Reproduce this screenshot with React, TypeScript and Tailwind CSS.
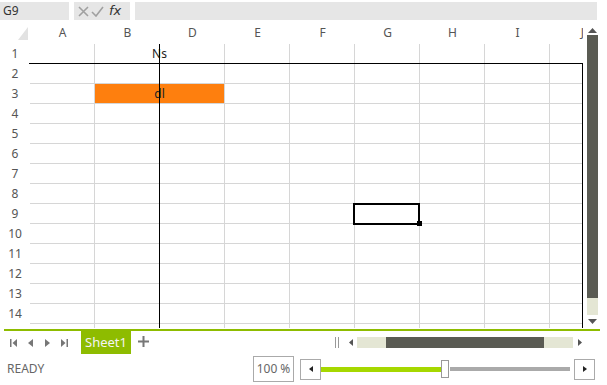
import React from "react";

const cols = ["A", "B", "D", "E", "F", "G", "H", "I", "J"];
const rows = Array.from({ length: 15 }, (_, i) => i + 1);

function Cell({ w, children, bg, last }: { w: number; children?: React.ReactNode; bg?: string; last?: boolean }) {
  return (
    <div
      className={`shrink-0 h-full flex items-center justify-center text-[12px] text-[#222] ${last ? "" : "border-r border-[#d6d6d6]"}`}
      style={{ width: w, background: bg }}
    >
      {children}
    </div>
  );
}

export default function App() {
  return (
    <div
      className="w-[607px] h-[385px] bg-white relative overflow-hidden select-none"
      style={{ fontFamily: '"Noto Sans", "Open Sans", sans-serif' }}
    >
      {/* formula bar */}
      <div className="flex h-[22px] pt-[2px]">
        <div className="w-[69px] h-[18px] bg-[#e6e6e6] text-[12px] leading-[18px] text-[#333] pl-[3px]">G9</div>
        <div className="ml-[5px] w-[56px] h-[18px] bg-[#e6e6e6] flex items-center pl-[4px] gap-[2px]">
          <svg width="11" height="11" viewBox="0 0 11 11">
            <path d="M1 1 L10 10 M10 1 L1 10" stroke="#a0a0a0" strokeWidth="1.6" />
          </svg>
          <svg width="13" height="11" viewBox="0 0 13 11">
            <path d="M1 6 L5 10 L12 1" stroke="#a0a0a0" strokeWidth="1.6" fill="none" />
          </svg>
          <span className="italic text-[13px] text-[#333] ml-[3px] leading-[18px]" style={{ fontFamily: '"DejaVu Sans", sans-serif' }}>fx</span>
        </div>
        <div className="ml-[5px] w-[462px] h-[18px] bg-[#e6e6e6]" />
      </div>

      {/* grid + vertical scroll */}
      <div className="flex h-[306px]">
        <div className="w-[583px] h-full overflow-hidden relative">
          {/* column headers */}
          <div className="flex h-[22px]">
            <div className="w-[30px] shrink-0 h-full flex items-end justify-start pl-[18px] pb-[4px]">
              <svg width="10" height="13" viewBox="0 0 10 13">
                <polygon points="10,0 10,13 0,13" fill="#e2e2e2" />
              </svg>
            </div>
            {cols.map((c) => (
              <div key={c} className="w-[65px] shrink-0 h-full flex items-center justify-center text-[12px] text-[#555]">
                {c}
              </div>
            ))}
          </div>
          {/* rows */}
          {rows.map((r) => (
            <div key={r} className="flex h-[20px]">
              <div className="w-[30px] shrink-0 h-full flex items-center justify-center text-[12px] text-[#555]">{r < 15 ? r : ""}</div>
              <div className="flex h-full border-b border-[#d6d6d6]">
                <Cell w={65} />
                {r === 1 ? (
                  <Cell w={130}>Ns</Cell>
                ) : r === 3 ? (
                  <Cell w={130} bg="#fe7f0e">dl</Cell>
                ) : (
                  <>
                    <Cell w={65} />
                    <Cell w={65} />
                  </>
                )}
                {["E", "F", "G", "H", "I"].map((c) => (
                  <Cell key={c} w={65} />
                ))}
                <Cell w={65} last />
              </div>
            </div>
          ))}
          {/* frozen pane lines */}
          <div className="absolute left-[29px] top-[41px] w-[554px] h-[270px] border-t border-r border-black" />
          <div className="absolute left-[159px] top-[22px] w-px h-[284px] bg-black" />
          {/* selection */}
          <div className="absolute left-[353px] top-[181px] w-[67px] h-[22px] border-2 border-black" />
          <div className="absolute left-[417px] top-[199px] w-[5px] h-[5px] bg-black" />
        </div>
        {/* vertical scrollbar */}
        <div className="w-[15px] h-full flex flex-col items-center pl-[3px]">
          <div className="h-[13px] flex items-end pb-[2px]">
            <svg width="9" height="5" viewBox="0 0 9 5">
              <polygon points="4.5,0 9,5 0,5" fill="#555" />
            </svg>
          </div>
          <div className="w-[11px] h-[263px] bg-[#5a5b53]" />
          <div className="w-[11px] h-[17px] bg-[#e4e6d4]" />
          <div className="h-[13px] flex items-center">
            <svg width="9" height="5" viewBox="0 0 9 5">
              <polygon points="0,0 9,0 4.5,5" fill="#555" />
            </svg>
          </div>
        </div>
      </div>

      {/* green divider */}
      <div className="ml-[4px] w-[596px] h-[2px] mt-[1px] bg-[#8ebc00]" />

      {/* sheet bar */}
      <div className="flex h-[23px] items-center">
        <div className="flex items-center h-full pl-[10px] gap-[10px] w-[81px]">
          <svg width="7" height="8" viewBox="0 0 7 8"><rect x="0" y="0" width="1.5" height="8" fill="#777" /><polygon points="7,0 7,8 2.5,4" fill="#777" /></svg>
          <svg width="7" height="8" viewBox="0 0 7 8"><polygon points="6,0 6,8 1,4" fill="#777" /></svg>
          <svg width="7" height="8" viewBox="0 0 7 8"><polygon points="1,0 1,8 6,4" fill="#777" /></svg>
          <svg width="7" height="8" viewBox="0 0 7 8"><polygon points="0,0 0,8 4.5,4" fill="#777" /><rect x="5.5" y="0" width="1.5" height="8" fill="#777" /></svg>
        </div>
        <div className="w-[50px] h-full bg-[#8ebc00] text-[#f4f4f4] text-[13px] flex items-center justify-center">Sheet1</div>
        <div className="ml-[6px] w-[12px] h-full flex items-center justify-center pb-[3px]">
          <svg width="11" height="11" viewBox="0 0 11 11"><path d="M5.5 0 V11 M0 5.5 H11" stroke="#777" strokeWidth="2" /></svg>
        </div>
        <div className="ml-[186px] h-full flex items-center">
          <div className="flex gap-[2px] h-[12px] pb-[2px]">
            <div className="w-px h-[11px] bg-[#999]" />
            <div className="w-px h-[11px] bg-[#999]" />
          </div>
          <div className="ml-[10px]">
            <svg width="4" height="7" viewBox="0 0 4 7"><polygon points="4,0 4,7 0,3.5" fill="#555" /></svg>
          </div>
          <div className="ml-[4px] w-[216px] h-[11px] bg-[#e4e6d4] flex">
            <div className="ml-[29px] w-[158px] h-full bg-[#5a5b53]" />
          </div>
          <div className="ml-[5px]">
            <svg width="4" height="7" viewBox="0 0 4 7"><polygon points="0,0 0,7 4,3.5" fill="#555" /></svg>
          </div>
        </div>
      </div>

      {/* status bar */}
      <div className="flex items-center h-[30px]">
        <div className="pl-[7px] w-[253px] text-[12px] text-[#666]">READY</div>
        <div className="w-[41px] h-[26px] border border-[#aaa] flex items-center justify-center text-[12px] text-[#666]">100 %</div>
        <div className="ml-[6px] w-[21px] h-[21px] border border-[#aaa] flex items-center justify-center">
          <svg width="4" height="6" viewBox="0 0 4 6"><polygon points="4,0 4,6 0,3" fill="#222" /></svg>
        </div>
        <div className="w-[120px] h-[5px] bg-[#a6d800]" />
        <div className="w-[8px] h-[18px] border border-[#999] bg-white" />
        <div className="ml-[1px] w-[120px] h-[4px] bg-[#aaa]" />
        <div className="ml-[4px] w-[21px] h-[21px] border border-[#aaa] flex items-center justify-center">
          <svg width="4" height="6" viewBox="0 0 4 6"><polygon points="0,0 0,6 4,3" fill="#222" /></svg>
        </div>
      </div>
    </div>
  );
}
